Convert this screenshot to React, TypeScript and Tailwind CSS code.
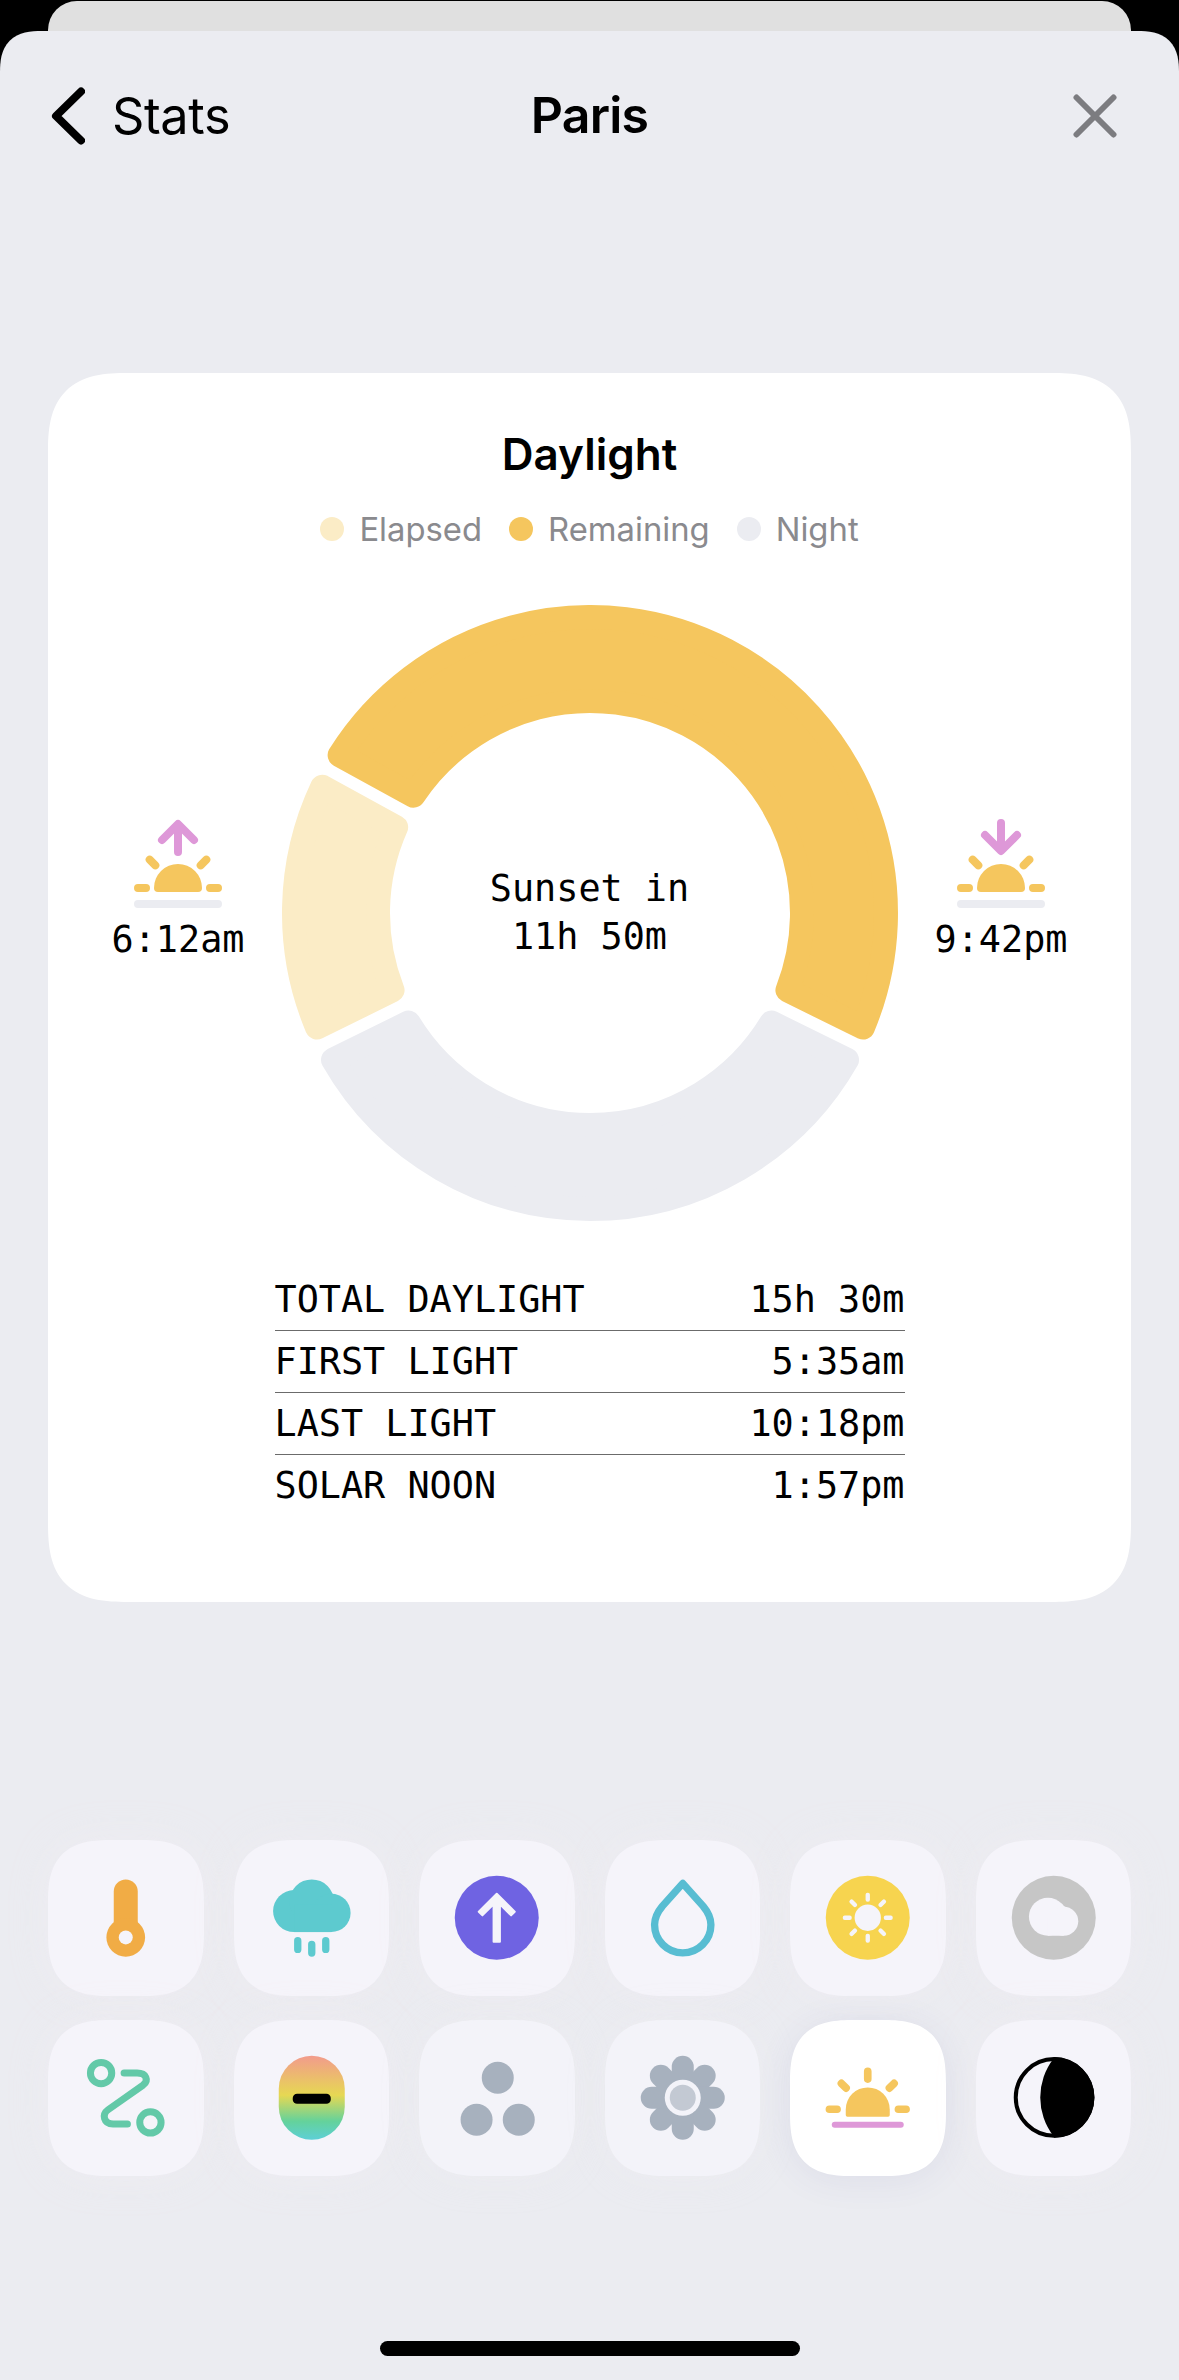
import React from "react";

const TILE = "#f5f4fa";
const SUN = "#f5c65e";
const PURPLE = "#de98d8";
const SLATE = "#a7b1be";

/* ---------- Daylight ring ---------- */

const OUTER = 308;
const INNER = 200;
const CORNER = 12;
const INSET = 6;

function point(radius: number, deg: number) {
  const a = ((deg - 90) * Math.PI) / 180;
  return `${(radius * Math.cos(a)).toFixed(2)} ${(radius * Math.sin(a)).toFixed(2)}`;
}

// Sector shrunk by the corner radius; a round-joined stroke restores its size.
function sectorPath(start: number, end: number) {
  const ro = OUTER - CORNER;
  const ri = INNER + CORNER;
  const d = INSET + CORNER;
  const ao = (Math.asin(d / ro) * 180) / Math.PI;
  const ai = (Math.asin(d / ri) * 180) / Math.PI;
  const largeO = end - start - 2 * ao > 180 ? 1 : 0;
  const largeI = end - start - 2 * ai > 180 ? 1 : 0;
  return [
    `M${point(ro, start + ao)}`,
    `A${ro} ${ro} 0 ${largeO} 1 ${point(ro, end - ao)}`,
    `L${point(ri, end - ai)}`,
    `A${ri} ${ri} 0 ${largeI} 0 ${point(ri, start + ai)}`,
    "Z",
  ].join(" ");
}

const sectors = [
  { start: -116.25, end: -61.25, color: "#fbecc6" },
  { start: -61.25, end: 116.25, color: SUN },
  { start: 116.25, end: 243.75, color: "#ebecf1" },
];

function Ring() {
  return (
    <div className="relative size-[616px]">
      <svg viewBox="-308 -308 616 616" className="size-full">
        {sectors.map((s) => (
          <path
            key={s.start}
            d={sectorPath(s.start, s.end)}
            fill={s.color}
            stroke={s.color}
            strokeWidth={CORNER * 2}
            strokeLinejoin="round"
          />
        ))}
      </svg>
      <div className="absolute inset-0 flex flex-col items-center justify-center text-center font-['DejaVu_Sans_Mono',monospace] text-[36.8px] leading-[48px]">
        <span>Sunset in</span>
        <span>11h 50m</span>
      </div>
    </div>
  );
}

function SunEvent({ rising, time }: { rising: boolean; time: string }) {
  return (
    <div className="flex w-[133px] flex-col items-center">
      <svg viewBox="-132 -210 264 276" className="h-[92px] w-[88px]" fill="none" strokeLinecap="round" strokeLinejoin="round" strokeWidth={24}>
        {rising ? (
          <path d="M0 -108V-189M-48 -144L0 -192L48 -144" stroke={PURPLE} />
        ) : (
          <path d="M0 -195V-114M-48 -159L0 -111L48 -159" stroke={PURPLE} />
        )}
        <path d="M-85 -85L-68 -68M85 -85L68 -68M-120 0H-96M120 0H96" stroke={SUN} />
        <path d="M-72 0A72 72 0 0 1 72 0Q72 12 60 12H-60Q-72 12 -72 0Z" fill={SUN} />
        <path d="M-120 48H120" stroke="#ebecf1" />
      </svg>
      <span className="mt-[6px] font-['DejaVu_Sans_Mono',monospace] text-[36.8px] leading-[48px]">{time}</span>
    </div>
  );
}

/* ---------- Tab icons (each centred on 0,0) ---------- */

const Thermometer = (
  <>
    <rect x={-36} y={-115} width={72} height={170} rx={36} fill="#f1ac45" />
    <circle cy={59} r={58} fill="#f1ac45" />
    <circle cy={59} r={21} fill={TILE} />
  </>
);

const Rain = (
  <>
    <g fill="#5dcacf">
      <circle cx={-53} cy={-20} r={63} />
      <circle cx={0} cy={-48} r={67} />
      <circle cx={59} cy={-14.5} r={57.5} />
      <rect x={-53} y={-40} width={112} height={83} />
    </g>
    <path d="M-42 69V95M0 80V106M42 69V95" stroke="#5dcacf" strokeWidth={22} strokeLinecap="round" />
  </>
);

const Wind = (
  <>
    <circle r={126} fill="#6f63e2" />
    <path
      d="M0 -72L54 -18L43 -7L9.500 -40.500V72H-9.500V-40.500L-43 -7L-54 -18Z"
      fill={TILE}
      stroke={TILE}
      strokeWidth={6}
      strokeLinejoin="round"
    />
  </>
);

const Drop = (
  <path
    d="M0 -103L-61 -35C-76 -17 -84.500 0 -84.500 21A84.500 84.500 0 0 0 84.500 21C84.500 0 76 -17 61 -35Z"
    fill="none"
    stroke="#58bdd2"
    strokeWidth={22}
    strokeLinejoin="round"
  />
);

const Uv = (
  <>
    <circle r={126} fill="#f7d44f" />
    <circle r={39.5} fill={TILE} />
    {[0, 45, 90, 135, 180, 225, 270, 315].map((a) => (
      <rect key={a} x={-6.5} y={-75} width={13} height={27} rx={6} fill={TILE} transform={`rotate(${a})`} />
    ))}
  </>
);

const Cloud = (
  <>
    <circle r={126} fill="#c6c6c6" />
    <g fill={TILE}>
      <circle cx={-17.5} cy={-3} r={57} />
      <circle cx={30} cy={10.5} r={43.5} />
      <rect x={-17.5} y={0} width={47.5} height={54} />
      <path d="M24 -43Q30 -34 35 -33L10 0Z" />
    </g>
  </>
);

const Route = (
  <g fill="none" stroke="#63c9a8" strokeWidth={21} strokeLinecap="round">
    <circle cx={-74} cy={-74} r={32} />
    <circle cx={74} cy={74} r={32} />
    <path d="M-5 -74H34C62 -74 70 -52 52 -38L-53 36C-72 50 -67 78 -38 79H5" />
  </g>
);

const Pressure = (
  <>
    <defs>
      <linearGradient id="spectrum" x1="0" y1="0" x2="0" y2="1">
        <stop offset="0" stopColor="#f29b8c" />
        <stop offset="0.47" stopColor="#e6d853" />
        <stop offset="0.78" stopColor="#64d29b" />
        <stop offset="1" stopColor="#5dcfd6" />
      </linearGradient>
    </defs>
    <rect x={-99} y={-126} width={198} height={252} rx={99} fill="url(#spectrum)" />
    <rect x={-57} y={-12} width={114} height={30} rx={13} fill="#000" />
  </>
);

const Particles = (
  <g fill={SLATE}>
    <circle cx={3} cy={-60} r={48} />
    <circle cx={-60.5} cy={66} r={48} />
    <circle cx={66} cy={66} r={48} />
  </g>
);

const Pollen = (
  <>
    {[0, 45, 90, 135, 180, 225, 270, 315].map((a) => (
      <rect key={a} x={-33} y={-126} width={66} height={126} rx={33} fill={SLATE} transform={`rotate(${a})`} />
    ))}
    <circle r={54} fill="#f3f3f9" />
    <circle r={39} fill="#c3c9d3" />
  </>
);

const Daylight = (
  <>
    <path
      d="M0 -79V-56M-79 -43L-65 -29M79 -43L65 -29M-115 34.500H-92M115 34.500H92"
      stroke={SUN}
      strokeWidth={23}
      strokeLinecap="round"
    />
    <path d="M-66 35A66 66 0 0 1 66 35V52Q66 57 61 57H-61Q-66 57 -66 52Z" fill={SUN} />
    <path d="M-99 81H99" stroke={PURPLE} strokeWidth={18} strokeLinecap="round" />
  </>
);

const Moon = (
  <>
    <circle cx={1} cy={-1} r={115} fill="none" stroke="#000" strokeWidth={12} />
    <path d="M-1 -117A190 190 0 0 0 -1 115L1 120A121 121 0 0 0 1 -122Z" fill="#000" />
  </>
);

const NORMAL = "bg-[#f5f4fa] shadow-[0_0_36px_rgba(245,238,243,0.35)]";
const DIMMED = "bg-[#f3f3f9] shadow-[0_0_36px_rgba(245,238,243,0.25)]";
const SELECTED = "bg-white shadow-[0_4px_36px_rgba(70,70,140,0.08)]";

const tiles: { name: string; icon: React.ReactNode; look: string }[] = [
  { name: "Temperature", icon: Thermometer, look: NORMAL },
  { name: "Precipitation", icon: Rain, look: NORMAL },
  { name: "Wind", icon: Wind, look: NORMAL },
  { name: "Humidity", icon: Drop, look: NORMAL },
  { name: "UV", icon: Uv, look: NORMAL },
  { name: "Cloud cover", icon: Cloud, look: NORMAL },
  { name: "Visibility", icon: Route, look: NORMAL },
  { name: "Pressure", icon: Pressure, look: NORMAL },
  { name: "Air quality", icon: Particles, look: DIMMED },
  { name: "Pollen", icon: Pollen, look: DIMMED },
  { name: "Daylight", icon: Daylight, look: SELECTED },
  { name: "Moon", icon: Moon, look: NORMAL },
];

const legend = [
  { label: "Elapsed", dot: "bg-[#fbecc6]" },
  { label: "Remaining", dot: "bg-[#f5c65e]" },
  { label: "Night", dot: "bg-[#ebecf1]" },
];

const rows = [
  ["TOTAL DAYLIGHT", "15h 30m"],
  ["FIRST LIGHT", "5:35am"],
  ["LAST LIGHT", "10:18pm"],
  ["SOLAR NOON", "1:57pm"],
];

export default function App() {
  return (
    <div className="flex h-[2380px] w-[1179px] flex-col bg-black font-['Inter',sans-serif] text-black">
      <div className="mx-12 mt-px h-[30px] shrink-0 rounded-t-[29px] bg-[#e0e0e0]" />
      <div className="flex flex-1 flex-col rounded-t-[32px] bg-[#ebecf1] supports-[corner-shape:squircle]:rounded-t-[42px] supports-[corner-shape:squircle]:[corner-shape:superellipse(1.4)]">
        <header className="grid h-[170px] grid-cols-3 items-center px-[51px]">
          <div className="flex items-center">
            <svg viewBox="0 0 34 58" className="h-[58px] w-[34px]" fill="none" stroke="#000" strokeWidth={8} strokeLinecap="round" strokeLinejoin="round">
              <path d="M30 4.500L5 29L30 53.500" />
            </svg>
            <span className="ml-[27px] text-[50.500px] leading-none tracking-[-0.4px]">Stats</span>
          </div>
          <h1 className="-mt-[2px] text-center text-[50px] font-semibold leading-none tracking-[-0.8px]">Paris</h1>
          <svg viewBox="0 0 44 44" className="mr-[11px] size-[44px] justify-self-end" stroke="#7c7c80" strokeWidth={6} strokeLinecap="round">
            <path d="M3.500 3.500L40.500 40.500M40.500 3.500L3.500 40.500" />
          </svg>
        </header>

        <section className="mx-12 mt-[172px] flex h-[1229px] shrink-0 flex-col items-center rounded-[62px] bg-white supports-[corner-shape:squircle]:rounded-[80px] supports-[corner-shape:squircle]:[corner-shape:superellipse(1.45)]">
          <h2 className="mt-[54px] text-[44px] font-semibold leading-[54px]">Daylight</h2>
          <div className="mt-[27px] flex h-[42px] items-center gap-[27px]">
            {legend.map((l) => (
              <div key={l.label} className="flex items-center">
                <span className={`size-[24px] rounded-full ${l.dot}`} />
                <span className="ml-[15px] text-[32.800px] leading-[42px] text-[#8a8a8e]">{l.label}</span>
              </div>
            ))}
          </div>
          <div className="mt-[55px] flex w-[956px] items-start justify-between">
            <div className="mt-[213px]">
              <SunEvent rising time="6:12am" />
            </div>
            <Ring />
            <div className="mt-[213px]">
              <SunEvent rising={false} time="9:42pm" />
            </div>
          </div>
          <dl className="mt-[48px] w-[630px] divide-y divide-[#6b6b6b] font-['DejaVu_Sans_Mono',monospace] text-[36.8px]">
            {rows.map(([k, v]) => (
              <div key={k} className="flex h-[62px] items-center justify-between leading-[60px]">
                <dt>{k}</dt>
                <dd>{v}</dd>
              </div>
            ))}
          </dl>
        </section>

        <nav className="mx-12 mt-[238px] grid grid-cols-6 gap-x-[30px] gap-y-[24.500px]">
          {tiles.map((t) => (
            <button
              key={t.name}
              aria-label={t.name}
              className={`h-[155.500px] rounded-[50px] supports-[corner-shape:squircle]:rounded-[64px] supports-[corner-shape:squircle]:[corner-shape:superellipse(1.45)] ${t.look}`}
            >
              <svg viewBox="-233.25 -233.25 466.5 466.5" className="size-full">
                {t.icon}
              </svg>
            </button>
          ))}
        </nav>

        <div className="mx-auto mb-[24px] mt-auto h-[15px] w-[420px] rounded-full bg-black" />
      </div>
    </div>
  );
}
